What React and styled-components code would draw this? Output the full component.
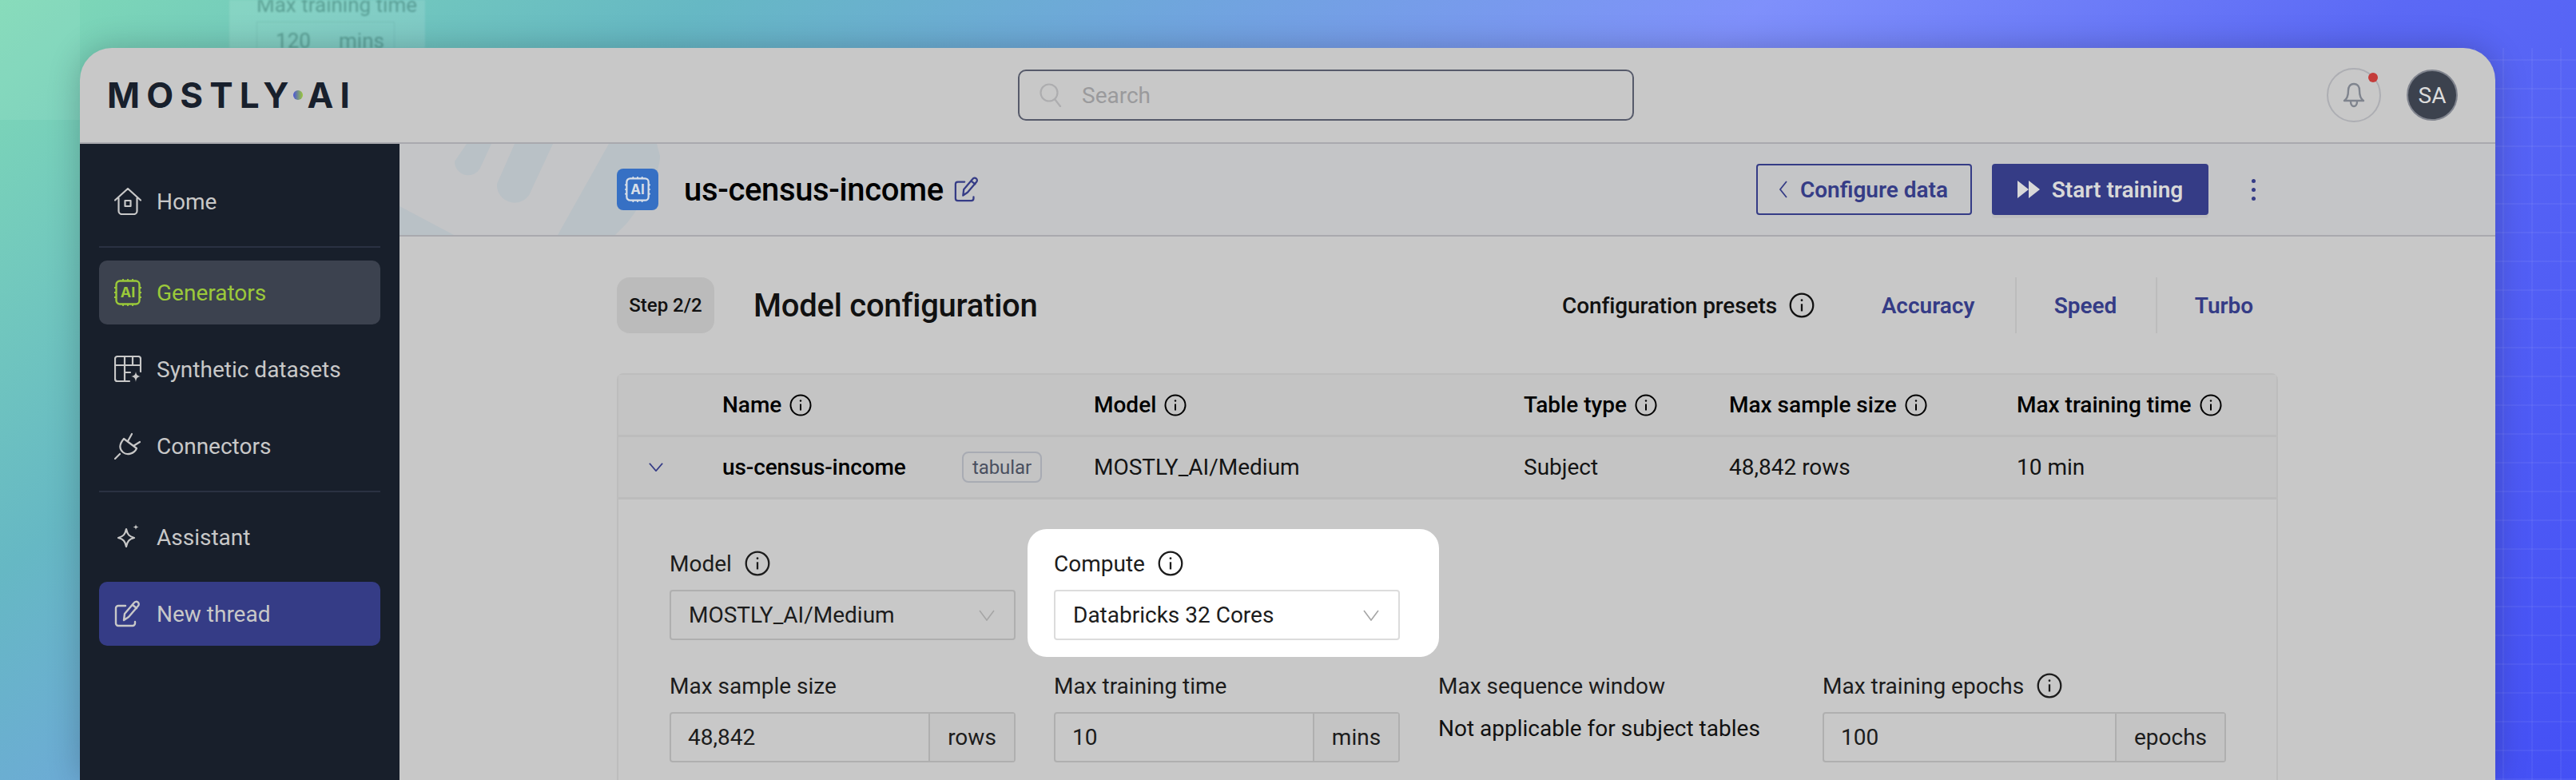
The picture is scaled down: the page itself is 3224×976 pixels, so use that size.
import styled, { createGlobalStyle } from 'styled-components';

const GlobalStyle = createGlobalStyle`
  html, body { margin: 0; padding: 0; }
  body { font-family: Roboto, "Liberation Sans", sans-serif; color: #1c1c1c; }
  * { box-sizing: border-box; }
`;

const Page = styled.div`
  position: relative;
  width: 3224px;
  height: 976px;
  overflow: hidden;
  padding: 60px 101px 0 100px;
  background: linear-gradient(141deg, #7fdab6 0%, #66b8c4 20%, #6fa6dc 33%, #7f90fb 50%, #5b69f5 68%, #4450f5 100%);
`;

const GridOverlay = styled.div`
  position: absolute;
  right: 0;
  top: 60px;
  width: 200px;
  height: 916px;
  background:
    repeating-linear-gradient(90deg, rgba(255,255,255,0.05) 0 2px, transparent 2px 36px),
    repeating-linear-gradient(0deg, rgba(255,255,255,0.05) 0 2px, transparent 2px 36px);
`;

const GhostBand = styled.div`
  position: absolute;
  left: 0;
  top: 0;
  width: 100px;
  height: 150px;
  background: rgba(255, 255, 255, 0.07);
`;

const GhostCard = styled.div`
  position: absolute;
  left: 287px;
  top: 0;
  width: 245px;
  height: 60px;
  padding-left: 34px;
  background: rgba(255, 255, 255, 0.12);
  color: rgba(40, 100, 90, 0.45);
  filter: blur(0.8px);
  overflow: hidden;
`;

const GhostLabel = styled.div`
  margin-top: -8px;
  font-size: 26px;
  line-height: 28px;
`;

const GhostInput = styled.div`
  width: 173px;
  height: 60px;
  margin-top: 7px;
  padding-top: 8px;
  border: 1px solid rgba(40, 100, 90, 0.12);
  display: grid;
  grid-template-columns: 90px 1fr;
  align-items: start;
  justify-items: center;
  font-size: 26px;
  line-height: 30px;
`;

const Window = styled.div`
  position: relative;
  height: 916px;
  border-radius: 40px 40px 0 0;
  background: #c8c8c8;
  box-shadow: 0 0 40px rgba(0, 0, 0, 0.22);
  overflow: hidden;
  display: flex;
  flex-direction: column;
`;

const TopBar = styled.header`
  height: 120px;
  flex: none;
  border-bottom: 2px solid #a9a9ae;
  display: grid;
  grid-template-columns: 1140px 771px 1fr;
  align-items: center;
  padding: 0 47px 0 34px;
`;

const Logo = styled.div`
  display: flex;
  align-items: center;
  font-family: Inter, sans-serif;
  font-weight: 700;
  font-size: 44px;
  line-height: 1;
  color: #18202c;
  letter-spacing: 8.2px;
`;

const LogoDot = styled.span`
  width: 12px;
  height: 12px;
  margin: 0 6px 0 -3px;
  border-radius: 50%;
  background: linear-gradient(90deg, #4a55d8, #9bc93a);
`;

const SearchBox = styled.div`
  height: 64px;
  border: 2px solid #565a6a;
  border-radius: 10px;
  display: flex;
  align-items: center;
  gap: 25px;
  padding-left: 25px;
  font-size: 28px;
  color: #9a9a9c;
`;

const TopActions = styled.div`
  display: flex;
  justify-content: flex-end;
  align-items: center;
  gap: 32px;
`;

const BellButton = styled.div`
  position: relative;
  width: 68px;
  height: 68px;
  border: 2px solid #adaeb3;
  border-radius: 50%;
  display: flex;
  align-items: center;
  justify-content: center;
`;

const BellDot = styled.span`
  position: absolute;
  top: 4px;
  right: 2px;
  width: 12px;
  height: 12px;
  border-radius: 50%;
  background: #c43c3a;
`;

const Avatar = styled.div`
  width: 64px;
  height: 64px;
  border-radius: 50%;
  border: 2px solid #80848e;
  background: #3c424e;
  color: #dcdcdc;
  font-size: 28px;
  display: flex;
  align-items: center;
  justify-content: center;
`;

const Body = styled.div`
  flex: 1;
  display: grid;
  grid-template-columns: 400px 1fr;
  min-height: 0;
`;

const Sidebar = styled.nav`
  background: #181f2b;
  padding: 32px 24px;
  display: flex;
  flex-direction: column;
  gap: 16px;
`;

const NavItem = styled.div`
  height: 80px;
  border-radius: 10px;
  display: flex;
  align-items: center;
  gap: 19px;
  padding-left: 19px;
  font-size: 28px;
  color: ${p => (p.$active ? '#9bc93a' : '#c8c8c8')};
  background: ${p => (p.$active ? '#3c424f' : p.$primary ? '#353c86' : 'transparent')};
`;

const NavDivider = styled.div`
  height: 2px;
  background: #2a3142;
`;

const Main = styled.main`
  min-width: 0;
  overflow: hidden;
`;

const PageHeader = styled.div`
  position: relative;
  height: 116px;
  padding: 0 272px;
  background: #c4c5c7;
  border-bottom: 2px solid #a9a9ae;
  display: flex;
  align-items: center;
  justify-content: space-between;
  overflow: hidden;
`;

const HeaderArt = styled.svg`
  position: absolute;
  left: 0;
  top: 0;
`;

const TitleWrap = styled.div`
  position: relative;
  display: flex;
  align-items: center;
`;

const ChipBadge = styled.div`
  width: 52px;
  height: 52px;
  border-radius: 8px;
  background: #3670c4;
  display: flex;
  align-items: center;
  justify-content: center;
  margin-right: 32px;
`;

const PageTitle = styled.h1`
  margin: 0 13px 0 0;
  font-size: 40px;
  font-weight: 500;
  letter-spacing: -0.35px;
  color: #000;
`;

const HeaderActions = styled.div`
  position: relative;
  display: flex;
  align-items: center;
  gap: 25px;
`;

const Button = styled.div`
  height: 64px;
  width: ${p => p.$w}px;
  padding-right: ${p => (p.$filled ? 0 : 2)}px;
  border-radius: 4px;
  display: flex;
  align-items: center;
  justify-content: center;
  gap: 15px;
  font-size: 28px;
  font-weight: 600;
  color: ${p => (p.$filled ? '#d8d8d8' : '#353c86')};
  background: ${p => (p.$filled ? '#353c86' : 'transparent')};
  border: ${p => (p.$filled ? 'none' : '2px solid #353c86')};
  box-shadow: ${p => (p.$filled ? '0 4px 0 #bdbdc0' : 'none')};
`;

const Kebab = styled.div`
  width: 42px;
  display: flex;
  flex-direction: column;
  align-items: center;
  gap: 6px;
  margin: 0 10px;
`;

const KebabDot = styled.span`
  width: 5px;
  height: 5px;
  border-radius: 50%;
  background: #353c86;
`;

const Content = styled.div`
  padding: 51px 272px 0;
`;

const StepRow = styled.div`
  height: 70px;
  display: flex;
  align-items: center;
`;

const StepBadge = styled.div`
  width: 122px;
  height: 70px;
  border-radius: 16px;
  background: #bbbbbb;
  font-size: 24px;
  font-weight: 500;
  color: #111;
  display: flex;
  align-items: center;
  justify-content: center;
  margin-right: 49px;
`;

const StepTitle = styled.h2`
  margin: 0;
  font-size: 40px;
  font-weight: 500;
  letter-spacing: -0.25px;
  color: #111;
  flex: 1;
`;

const Presets = styled.div`
  display: flex;
  align-items: center;
  font-size: 28px;
  font-weight: 500;
  color: #111;
`;

const PresetLabel = styled.div`
  display: flex;
  align-items: center;
  gap: 15px;
  margin-right: 33px;
  letter-spacing: -0.1px;
`;

const PresetLink = styled.div`
  height: 70px;
  display: flex;
  align-items: center;
  justify-content: center;
  width: ${p => p.$w}px;
  padding-left: ${p => p.$inset || 0}px;
  padding-right: ${p => p.$insetEnd || 0}px;
  font-weight: 600;
  letter-spacing: 0;
  color: #353c86;
  border-left: ${p => (p.$line ? '2px solid #bcbcbc' : 'none')};
`;

const TableCard = styled.section`
  margin-top: 50px;
  border: 2px solid #bdbdbd;
  border-bottom: none;
  border-radius: 8px 8px 0 0;
  height: 600px;
`;

const Row = styled.div`
  height: 78px;
  display: grid;
  grid-template-columns: 130px 465px 538px 257px 360px 1fr;
  align-items: center;
  background: #c4c4c4;
  border-bottom: 3px solid #bcbcbc;
  font-size: 28px;
  font-weight: ${p => (p.$head ? 500 : 400)};
  color: #141414;
`;

const HeadCell = styled.div`
  display: flex;
  align-items: center;
  gap: 10px;
  color: #000;
`;

const NameCell = styled.div`
  display: flex;
  align-items: center;
  justify-content: space-between;
  padding-right: 65px;
  font-weight: 500;
  letter-spacing: -0.1px;
  color: #000;
`;

const Tag = styled.span`
  width: 100px;
  height: 39px;
  border: 2px solid #a8abb3;
  border-radius: 8px;
  font-size: 24px;
  font-weight: 400;
  color: #4a5060;
  display: flex;
  align-items: center;
  justify-content: center;
`;

const Toggle = styled.div`
  display: flex;
  justify-content: center;
  padding-right: 36px;
`;

const FormGrid = styled.div`
  display: grid;
  grid-template-columns: 433px 433px 433px 505px;
  column-gap: 48px;
  row-gap: 36px;
  padding: 59px 0 0 64px;
`;

const Field = styled.div`
  position: relative;
  z-index: 0;

  ${p => p.$highlight && `
    &::before {
      content: '';
      position: absolute;
      z-index: -1;
      inset: -22px -49px -21px -33px;
      background: #fff;
      border-radius: 24px;
    }
  `}
`;

const FieldLabel = styled.div`
  height: 40px;
  margin-bottom: 14px;
  padding-top: 2px;
  display: flex;
  align-items: center;
  gap: 16px;
  font-size: 28px;
  color: #1c1c1c;
`;

const SelectBox = styled.div`
  height: 63px;
  padding: 0 24px 0 22px;
  border: 2px solid ${p => (p.$bright ? '#dcdcdc' : '#afafaf')};
  border-radius: 4px;
  background: ${p => (p.$bright ? '#fff' : 'transparent')};
  display: flex;
  align-items: center;
  justify-content: space-between;
  font-size: 28px;
`;

const InputGroup = styled.div`
  height: 63px;
  display: flex;
  border: 2px solid #afafaf;
  border-radius: 4px;
  font-size: 28px;
`;

const InputValue = styled.div`
  flex: 1;
  padding-left: 21px;
  display: flex;
  align-items: center;
`;

const InputUnit = styled.div`
  width: ${p => p.$w}px;
  background: #c4c4c4;
  border-left: 2px solid #afafaf;
  display: flex;
  align-items: center;
  justify-content: center;
`;

const StaticText = styled.div`
  height: 40px;
  font-size: 28px;
  display: flex;
  align-items: center;
  color: #111;
`;

const Info = ({ size = 28 }) => (
  <svg width={size} height={size} viewBox="0 0 28 28" fill="none" stroke="currentColor" strokeWidth="2">
    <circle cx="14" cy="14" r="12.5" />
    <path d="M14 12.5v8" />
    <circle cx="14" cy="8.5" r="1.2" fill="currentColor" stroke="none" />
  </svg>
);

const ChipIcon = ({ color, size = 34 }) => (
  <svg width={size} height={size} viewBox="0 0 34 34" fill="none" stroke={color} strokeWidth="2.4">
    <rect x="2.5" y="2.5" width="29" height="29" rx="4.5" />
    <path d="M11 2V0M17 2V0M23 2V0M11 34v-2M17 34v-2M23 34v-2M0 11h2M0 17h2M0 23h2M32 11h2M32 17h2M32 23h2" strokeWidth="1.8" />
    <text x="17" y="23.3" textAnchor="middle" fontSize="18" fontWeight="700" fontFamily="Inter, sans-serif" fill={color} stroke="none">AI</text>
  </svg>
);

const HomeIcon = () => (
  <svg width="34" height="34" viewBox="0 0 34 34" fill="none" stroke="#c8c8c8" strokeWidth="2.2" strokeLinejoin="round" strokeLinecap="round">
    <path d="M1 15.5 17 1l16 14.5M5.5 12.5V29a4 4 0 0 0 4 4h15a4 4 0 0 0 4-4V12.5" />
    <rect x="13.5" y="16" width="7" height="7" />
  </svg>
);

const TableIcon = () => (
  <svg width="34" height="34" viewBox="0 0 34 34" fill="none" stroke="#c8c8c8" strokeWidth="2.2" strokeLinecap="round">
    <path d="M19 32H4a3 3 0 0 1-3-3V4a3 3 0 0 1 3-3h26a3 3 0 0 1 3 3v16M1 12h32M13 1v31M13 21h7M23 1v11" />
    <path d="M27 20c.7 4 1.8 5.300 6 6-4.200.7-5.300 2-6 7-.7-5-1.800-6.300-6-7 4.200-.7 5.300-2 6-6z" fill="#c8c8c8" stroke="none" />
  </svg>
);

const PlugIcon = () => (
  <svg width="34" height="34" viewBox="0 0 34 34" fill="none" stroke="#c8c8c8" strokeWidth="2.2" strokeLinecap="round" strokeLinejoin="round">
    <path d="M1 33l6-6M12 8 28 20c-3 7-12 9-17 5S6 15 12 8zM17 11l5-9M24 17l8-5" />
  </svg>
);

const SparkIcon = () => (
  <svg width="34" height="34" viewBox="0 0 34 34" fill="none" stroke="#c8c8c8" strokeWidth="2.2" strokeLinejoin="round">
    <path d="M15 7c1.500 7 3.500 9 10 11-6.500 1.500-8.500 4-10 11-1.500-7-3.500-9.500-10-11 6.500-2 8.500-4 10-11z" />
    <path d="M27 1c.4 2.300 1 3 3.500 3.500-2.500.5-3.100 1.200-3.500 3.500-.4-2.300-1-3-3.500-3.500 2.500-.5 3.100-1.200 3.500-3.500z" fill="#c8c8c8" stroke="none" />
  </svg>
);

const EditIcon = ({ color = '#c8c8c8', size = 34 }) => (
  <svg width={size} height={size} viewBox="0 0 34 34" fill="none" stroke={color} strokeWidth="2.4" strokeLinejoin="round" strokeLinecap="round">
    <path d="M14 7H5a3 3 0 0 0-3 3v19a3 3 0 0 0 3 3h18a3 3 0 0 0 3-3v-2" />
    <path d="M12 25l1-8L25 3a3 3 0 0 1 5 4L18 21z" />
    <path d="M23 6l5 4" />
  </svg>
);

const SearchIcon = () => (
  <svg width="28" height="30" viewBox="0 0 28 30" fill="none" stroke="#adadaf" strokeWidth="2.2" strokeLinecap="round">
    <circle cx="12" cy="12" r="10.500" />
    <path d="M19 20l7 9" />
  </svg>
);

const BellIcon = () => (
  <svg width="28" height="32" viewBox="0 0 28 32" fill="none" stroke="#7f848e" strokeWidth="2.4" strokeLinejoin="round">
    <path d="M14 2c5 0 7 4 7 8 0 7 2 11 5 13H2c3-2 5-6 5-13 0-4 2-8 7-8z" />
    <path d="M10 24c0 8 8 8 8 0" />
  </svg>
);

const Chevron = ({ w = 20, h = 14, color = '#a6a6a6', width = 1.6 }) => (
  <svg width={w} height={h} viewBox="0 0 20 14" preserveAspectRatio="none" fill="none" stroke={color} strokeWidth={width}>
    <path d="M1 1l9 12 9-12" />
  </svg>
);

const BackChevron = () => (
  <svg width="12" height="24" viewBox="0 0 12 24" fill="none" stroke="#353c86" strokeWidth="1.800">
    <path d="M10 2 2 12l8 10" />
  </svg>
);

const PlayIcon = () => (
  <svg width="28" height="24" viewBox="0 0 28 24" fill="#d8d8d8">
    <path d="M0 1v22l14-11zM14 1v22l14-11z" />
  </svg>
);

const navTop = [
  { label: 'Home', icon: <HomeIcon /> },
];
const navMiddle = [
  { label: 'Generators', icon: <ChipIcon color="#9bc93a" />, active: true },
  { label: 'Synthetic datasets', icon: <TableIcon /> },
  { label: 'Connectors', icon: <PlugIcon /> },
];

export default function App() {
  return (
    <Page>
      <GlobalStyle />
      <GridOverlay />
      <GhostBand />
      <GhostCard>
        <GhostLabel>Max training time</GhostLabel>
        <GhostInput><span>120</span><span>mins</span></GhostInput>
      </GhostCard>
      <Window>
        <TopBar>
          <Logo>MOSTLY<LogoDot />AI</Logo>
          <SearchBox><SearchIcon />Search</SearchBox>
          <TopActions>
            <BellButton><BellIcon /><BellDot /></BellButton>
            <Avatar>SA</Avatar>
          </TopActions>
        </TopBar>
        <Body>
          <Sidebar>
            {navTop.map(n => <NavItem key={n.label}>{n.icon}{n.label}</NavItem>)}
            <NavDivider />
            {navMiddle.map(n => <NavItem key={n.label} $active={n.active}>{n.icon}{n.label}</NavItem>)}
            <NavDivider />
            <NavItem><SparkIcon />Assistant</NavItem>
            <NavItem $primary><EditIcon />New thread</NavItem>
          </Sidebar>
          <Main>
            <PageHeader>
              <HeaderArt width="400" height="114" viewBox="0 0 400 114" fill="#b9c1c6" stroke="none">
                <path d="M84 0h31L102 28a17 17 0 0 1-33-6z" />
                <path d="M144 0h48l-27 58a22 22 0 0 1-43-8z" />
                <path d="M262 0 198 114h72l14-14c16-20 42-60 42-85l-4-15z" />
                <path d="M0 78l68 36H0z" />
              </HeaderArt>
              <TitleWrap>
                <ChipBadge><ChipIcon color="#d8dfe8" size={32} /></ChipBadge>
                <PageTitle>us-census-income</PageTitle>
                <EditIcon color="#353c86" size={32} />
              </TitleWrap>
              <HeaderActions>
                <Button $w={270}><BackChevron />Configure data</Button>
                <Button $w={271} $filled><PlayIcon />Start training</Button>
                <Kebab><KebabDot /><KebabDot /><KebabDot /></Kebab>
              </HeaderActions>
            </PageHeader>
            <Content>
              <StepRow>
                <StepBadge>Step 2/2</StepBadge>
                <StepTitle>Model configuration</StepTitle>
                <Presets>
                  <PresetLabel>Configuration presets <Info size={32} /></PresetLabel>
                  <PresetLink $w={218}>Accuracy</PresetLink>
                  <PresetLink $w={176} $insetEnd={2} $line>Speed</PresetLink>
                  <PresetLink $w={153} $inset={16} $line>Turbo</PresetLink>
                </Presets>
              </StepRow>
              <TableCard>
                <Row $head>
                  <span />
                  <HeadCell>Name <Info /></HeadCell>
                  <HeadCell>Model <Info /></HeadCell>
                  <HeadCell>Table type <Info /></HeadCell>
                  <HeadCell>Max sample size <Info /></HeadCell>
                  <HeadCell>Max training time <Info /></HeadCell>
                </Row>
                <Row>
                  <Toggle><Chevron w={18} h={11} color="#353c86" width={2} /></Toggle>
                  <NameCell>us-census-income<Tag>tabular</Tag></NameCell>
                  <div>MOSTLY_AI/Medium</div>
                  <div>Subject</div>
                  <div>48,842 rows</div>
                  <div>10 min</div>
                </Row>
                <FormGrid>
                  <Field>
                    <FieldLabel>Model <Info size={32} /></FieldLabel>
                    <SelectBox>MOSTLY_AI/Medium<Chevron /></SelectBox>
                  </Field>
                  <Field $highlight>
                    <FieldLabel>Compute <Info size={32} /></FieldLabel>
                    <SelectBox $bright>Databricks 32 Cores<Chevron /></SelectBox>
                  </Field>
                  <span />
                  <span />
                  <Field>
                    <FieldLabel>Max sample size</FieldLabel>
                    <InputGroup><InputValue>48,842</InputValue><InputUnit $w={107}>rows</InputUnit></InputGroup>
                  </Field>
                  <Field>
                    <FieldLabel>Max training time</FieldLabel>
                    <InputGroup><InputValue>10</InputValue><InputUnit $w={107}>mins</InputUnit></InputGroup>
                  </Field>
                  <Field>
                    <FieldLabel>Max sequence window</FieldLabel>
                    <StaticText>Not applicable for subject tables</StaticText>
                  </Field>
                  <Field>
                    <FieldLabel>Max training epochs <Info size={32} /></FieldLabel>
                    <InputGroup><InputValue>100</InputValue><InputUnit $w={137}>epochs</InputUnit></InputGroup>
                  </Field>
                </FormGrid>
              </TableCard>
            </Content>
          </Main>
        </Body>
      </Window>
    </Page>
  );
}
